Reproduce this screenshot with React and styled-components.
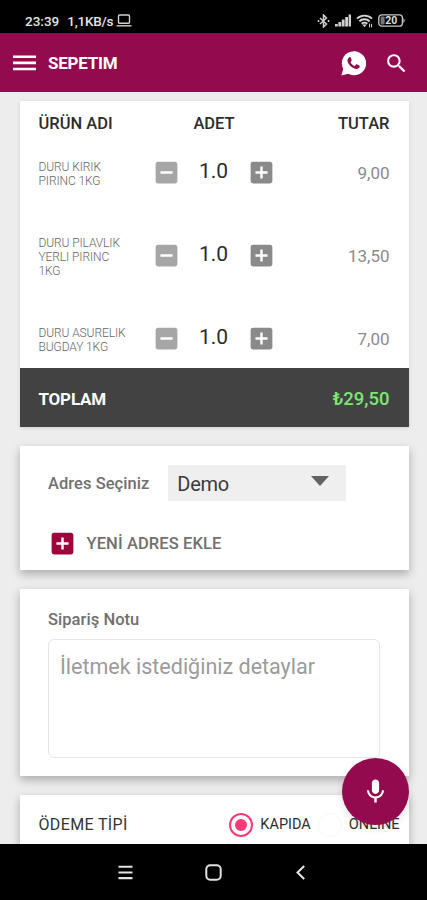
import React, { useState } from 'react';
import styled, { createGlobalStyle, ThemeProvider } from 'styled-components';
import { MdAddBox, MdIndeterminateCheckBox, MdMic, MdSearch } from 'react-icons/md';

const theme = {
  color: {
    primary: '#930b4e',
    accent: '#fb3a77',
    add: '#a0043c',
    page: '#ededed',
    dark: '#424242',
    green: '#7be872',
    white: '#ffffff',
    black: '#000000',
  },
};

const GlobalStyle = createGlobalStyle`
  * {
    box-sizing: border-box;
  }

  body {
    margin: 0;
    font-family: Roboto, 'Noto Sans', sans-serif;
  }

  svg {
    display: block;
    flex: none;
  }
`;

const Screen = styled.div`
  width: 427px;
  height: 900px;
  display: flex;
  flex-direction: column;
  overflow: hidden;
  background-color: ${({ theme }) => theme.color.page};
`;

const StatusBar = styled.div`
  height: 33px;
  flex: none;
  display: flex;
  justify-content: space-between;
  padding: 9px 21px 0 25px;
  background-color: ${({ theme }) => theme.color.black};
  color: #e4e4e4;
`;

const StatusGroup = styled.div`
  display: flex;
  height: 23px;
  align-items: center;
  gap: ${({ $gap }) => $gap}px;
`;

const StatusText = styled.span`
  font-size: 13.5px;
  font-weight: 500;
  letter-spacing: ${({ $spacing }) => $spacing || 0}px;
`;

const AppBar = styled.header`
  height: 59px;
  flex: none;
  display: flex;
  align-items: center;
  padding: 1px 18px 0 13px;
  background-color: ${({ theme }) => theme.color.primary};
  color: ${({ theme }) => theme.color.white};
`;

const Title = styled.h1`
  flex: 1;
  margin: 0 0 0 12px;
  font-size: 17px;
  font-weight: 700;
  letter-spacing: -0.25px;
`;

const Actions = styled.div`
  display: flex;
  align-items: center;
  gap: 18px;
`;

const Content = styled.main`
  flex: 1;
  min-height: 0;
  overflow: hidden;
  display: flex;
  flex-direction: column;
  gap: 19px;
  padding: 9px 18.5px 0 19.5px;
`;

const Card = styled.section`
  flex: none;
  height: ${({ $height }) => $height}px;
  background-color: ${({ theme }) => theme.color.white};
  box-shadow: ${({ $flat }) => ($flat ? '0 1px 4px rgba(0, 0, 0, 0.12)' : '0 4px 9px rgba(0, 0, 0, 0.28)')};
`;

const TableHead = styled.div`
  height: 45px;
  display: grid;
  grid-template-columns: 1fr 1fr 1fr;
  align-items: center;
  padding: 0 19px;
  font-size: 16.5px;
  font-weight: 500;
  color: #2c2c2c;
`;

const HeadCell = styled.span`
  text-align: ${({ $align }) => $align || 'left'};
`;

const Row = styled.div`
  height: ${({ $last }) => ($last ? 56 : 83)}px;
  display: flex;
  padding: 0 19px;
`;

const Name = styled.div`
  width: 113px;
  height: 56px;
  display: flex;
  align-items: center;
  padding-right: 22px;
  font-size: 12px;
  font-weight: 300;
  line-height: 14px;
  letter-spacing: -0.1px;
  color: #666666;
`;

const Stepper = styled.div`
  height: 52px;
  display: flex;
  align-items: center;
`;

const StepButton = styled.button`
  padding: 0;
  border: 0;
  background: none;
  color: ${({ $muted }) => ($muted ? '#a6a6a6' : '#8a8a8a')};
`;

const Quantity = styled.span`
  width: 66px;
  padding-bottom: 3px;
  text-align: center;
  font-size: 21px;
  color: #2b2b2b;
`;

const Price = styled.span`
  flex: 1;
  text-align: right;
  font-size: 17px;
  line-height: 55px;
  color: #8b8b8b;
`;

const TotalBar = styled.div`
  height: 59px;
  display: flex;
  align-items: center;
  justify-content: space-between;
  padding: 2px 19px 0;
  background-color: ${({ theme }) => theme.color.dark};
  color: ${({ theme }) => theme.color.white};
  font-size: 17px;
  font-weight: 700;
  letter-spacing: -0.2px;
`;

const TotalPrice = styled.span`
  color: ${({ theme }) => theme.color.green};
  font-size: 18.5px;
  font-weight: 500;
  letter-spacing: 0;
`;

const AddressLine = styled.div`
  display: flex;
  align-items: center;
  padding: 19px 0 0 28.5px;
`;

const Label = styled.label`
  font-size: 16.5px;
  font-weight: 500;
  letter-spacing: 0.05px;
  color: #707070;
`;

const Select = styled.div`
  width: 178px;
  height: 36px;
  display: flex;
  align-items: center;
  justify-content: space-between;
  margin-left: 19px;
  padding: 2px 17px 0 9px;
  background-color: #efefef;
  font-size: 20px;
  letter-spacing: -0.3px;
  color: #3a3a3a;
`;

const Caret = styled.span`
  margin-bottom: 6px;
  border: 9.5px solid transparent;
  border-top: 10px solid #636363;
  border-bottom: 0;
`;

const AddAddress = styled.button`
  display: flex;
  align-items: center;
  gap: 10px;
  margin-top: 28px;
  padding: 0 0 0 28px;
  border: 0;
  background: none;
  font-family: inherit;
  font-size: 16.5px;
  font-weight: 500;
  letter-spacing: 0.1px;
  color: #707070;

  svg {
    color: ${({ theme }) => theme.color.add};
  }
`;

const NoteBody = styled.div`
  display: flex;
  flex-direction: column;
  gap: 10px;
  padding: 21px 29px 0 28.5px;
`;

const NoteInput = styled.textarea`
  height: 119px;
  resize: none;
  padding: 13px 11px;
  border: 1px solid #e6e6e6;
  border-radius: 6px;
  outline: none;
  background: none;
  font-family: inherit;
  font-size: 21.5px;
  line-height: 28px;

  &::placeholder {
    color: #9b9b9b;
  }
`;

const PaymentLine = styled.div`
  height: 59px;
  display: flex;
  align-items: center;
  padding: 0 9px 0 19px;
`;

const PaymentTitle = styled.span`
  flex: 1;
  font-size: 16px;
  letter-spacing: 0.35px;
  color: #333333;
`;

const Option = styled.label`
  display: flex;
  align-items: center;
  gap: 7px;
  margin-left: 7px;
  font-size: 14.5px;
  color: #2f2f2f;
`;

const Radio = styled.span`
  width: 24px;
  height: 24px;
  display: flex;
  align-items: center;
  justify-content: center;
  border: ${({ $on, theme }) => ($on ? `2.5px solid ${theme.color.accent}` : '1.5px solid #f7f7f7')};
  border-radius: 50%;

  &::after {
    content: '';
    width: 12px;
    height: 12px;
    border-radius: 50%;
    background-color: ${({ $on, theme }) => ($on ? theme.color.accent : 'transparent')};
  }
`;

const MicButton = styled.button`
  position: fixed;
  left: 342px;
  top: 758px;
  width: 67px;
  height: 67px;
  display: flex;
  align-items: center;
  justify-content: center;
  padding: 0;
  border: 0;
  border-radius: 50%;
  background-color: ${({ theme }) => theme.color.primary};
  box-shadow: 0 3px 8px rgba(0, 0, 0, 0.12);
  color: ${({ theme }) => theme.color.white};
`;

const NavBar = styled.nav`
  height: 56px;
  flex: none;
  display: flex;
  justify-content: center;
  align-items: center;
  gap: 72px;
  background-color: ${({ theme }) => theme.color.black};
`;

const LaptopIcon = () => (
  <svg width="16" height="13" viewBox="0 0 16 13" fill="none" stroke="#cfcfcf" strokeWidth="1.4">
    <rect x="2.5" y="1" width="11" height="8.2" rx="1" />
    <path d="M0.5 11.8h15" />
  </svg>
);

const BluetoothIcon = () => (
  <svg width="13" height="14" viewBox="0 0 13 14" fill="none" stroke="#d0d0d0" strokeWidth="1.5">
    <path d="M3 4l6.5 6L6.5 13V1l3 3L3 10" />
    <path d="M1.5 6v2M11.5 6v2" />
  </svg>
);

const SignalIcon = () => (
  <svg width="18" height="13" viewBox="0 0 18 13" fill="#d0d0d0">
    <rect x="1" y="10" width="2.8" height="2.5" />
    <rect x="4.4" y="8" width="2.8" height="4.5" />
    <rect x="7.8" y="5.5" width="2.8" height="7" />
    <rect x="11.2" y="3" width="2.8" height="9.5" />
    <rect x="14.6" y="0.5" width="2.4" height="12" />
  </svg>
);

const WifiIcon = () => (
  <svg width="18" height="14" viewBox="0 0 18 14" fill="none" stroke="#d6d6d6" strokeWidth="1.9">
    <path d="M1 4.6a11 11 0 0 1 15 0" />
    <path d="M3.4 7.3a7.4 7.4 0 0 1 10.2 0" />
    <path d="M5.7 9.8a4 4 0 0 1 5.6 0" />
    <path d="M6.3 10.6L8.5 13.2l2.2-2.6z" fill="#d6d6d6" stroke="none" />
    <path d="M13.6 9.8v3.6M15.6 9.8v3.6" strokeWidth="1" />
  </svg>
);

const BatteryIcon = () => (
  <svg width="28" height="13" viewBox="0 0 28 13">
    <rect x="0.8" y="0.8" width="23.6" height="11.4" rx="3" fill="none" stroke="#c8c8c8" strokeWidth="1.3" />
    <rect x="2.6" y="2.6" width="4" height="7.8" rx="1" fill="#777777" />
    <path d="M25.4 4q2.6 2.5 0 5z" fill="#c8c8c8" />
    <text x="13.2" y="10.4" textAnchor="middle" fontSize="10.5" fontWeight="700" fill="#dddddd">20</text>
  </svg>
);

const MenuIcon = () => (
  <svg width="23" height="16" viewBox="0 0 23 16" fill="currentColor">
    <path d="M0 0.5h23v2.6H0zM0 6.6h23v2.6H0zM0 12.7h23v2.6H0z" />
  </svg>
);

const WhatsappIcon = () => (
  <svg width="25" height="25" viewBox="0 0 25 25">
    <path d="M12.8 0.3a12 12 0 1 1-5.6 22.4L0.4 24.6l1.8-6.7A12 12 0 0 1 12.8 0.3z" fill="#ffffff" />
    <path
      d="M8.1 6.4c.5-.4 1.2-.4 1.5.2l1 2.3c.2.5 0 .9-.3 1.3l-.8 1c.9 1.7 2.3 3 4.2 3.9l1.2-1.4c.3-.4.7-.4 1.1-.2l2.3 1.1c.5.3.5.7.4 1.2-.4 1.6-2.2 2.4-3.8 2.1-4.2-.8-7.5-4-8.4-7.6-.3-1.5.5-3.1 1.6-3.9z"
      fill="#930b4e"
    />
  </svg>
);

const RecentsIcon = () => (
  <svg width="15" height="15" viewBox="0 0 15 15" fill="#e2e2e2">
    <path d="M0.5 0.7h14v2H0.5zM0.5 6.4h14v2H0.5zM0.5 12h14v2.2H0.5z" />
  </svg>
);

const HomeIcon = () => (
  <svg width="17" height="17" viewBox="0 0 17 17" fill="none" stroke="#e2e2e2" strokeWidth="2">
    <rect x="1.3" y="1.3" width="14.4" height="14.4" rx="4" />
  </svg>
);

const BackIcon = () => (
  <svg width="15" height="15" viewBox="0 0 15 15" fill="none" stroke="#e8e8e8" strokeWidth="2">
    <path d="M10.2 1L3.5 7.5l6.7 6.5" />
  </svg>
);

const items = [
  { id: 1, name: 'DURU KIRIK PIRINC 1KG', quantity: '1.0', price: '9,00' },
  { id: 2, name: 'DURU PILAVLIK YERLI PIRINC 1KG', quantity: '1.0', price: '13,50' },
  { id: 3, name: 'DURU ASURELIK BUGDAY 1KG', quantity: '1.0', price: '7,00' },
];

function CartRow({ item, last }) {
  return (
    <Row $last={last}>
      <Name>{item.name}</Name>
      <Stepper>
        <StepButton $muted><MdIndeterminateCheckBox size={29} /></StepButton>
        <Quantity>{item.quantity}</Quantity>
        <StepButton><MdAddBox size={29} /></StepButton>
      </Stepper>
      <Price>{item.price}</Price>
    </Row>
  );
}

function App() {
  const [payment, setPayment] = useState('KAPIDA');
  return (
    <ThemeProvider theme={theme}>
      <GlobalStyle />
      <Screen>
        <StatusBar>
          <StatusGroup $gap={8}>
            <StatusText>23:39</StatusText>
            <StatusGroup $gap={3}>
              <StatusText $spacing={-0.25}>1,1KB/s</StatusText>
              <LaptopIcon />
            </StatusGroup>
          </StatusGroup>
          <StatusGroup $gap={4}>
            <BluetoothIcon />
            <SignalIcon />
            <WifiIcon />
            <BatteryIcon />
          </StatusGroup>
        </StatusBar>
        <AppBar>
          <MenuIcon />
          <Title>SEPETIM</Title>
          <Actions>
            <WhatsappIcon />
            <MdSearch size={25} />
          </Actions>
        </AppBar>
        <Content>
          <Card $height={326} $flat>
            <TableHead>
              <HeadCell>ÜRÜN ADI</HeadCell>
              <HeadCell $align="center">ADET</HeadCell>
              <HeadCell $align="right">TUTAR</HeadCell>
            </TableHead>
            {items.map((item, i) => (
              <CartRow key={item.id} item={item} last={i === items.length - 1} />
            ))}
            <TotalBar>
              <span>TOPLAM</span>
              <TotalPrice>₺29,50</TotalPrice>
            </TotalBar>
          </Card>
          <Card $height={124}>
            <AddressLine>
              <Label>Adres Seçiniz</Label>
              <Select>
                Demo
                <Caret />
              </Select>
            </AddressLine>
            <AddAddress>
              <MdAddBox size={29} />
              YENİ ADRES EKLE
            </AddAddress>
          </Card>
          <Card $height={187}>
            <NoteBody>
              <Label>Sipariş Notu</Label>
              <NoteInput placeholder="İletmek istediğiniz detaylar" />
            </NoteBody>
          </Card>
          <Card $height={120}>
            <PaymentLine>
              <PaymentTitle>ÖDEME TİPİ</PaymentTitle>
              {['KAPIDA', 'ONLINE'].map((type) => (
                <Option key={type} onClick={() => setPayment(type)}>
                  <Radio $on={payment === type} />
                  {type}
                </Option>
              ))}
            </PaymentLine>
          </Card>
        </Content>
        <NavBar>
          <RecentsIcon />
          <HomeIcon />
          <BackIcon />
        </NavBar>
        <MicButton><MdMic size={29} /></MicButton>
      </Screen>
    </ThemeProvider>
  );
}

export default App;
